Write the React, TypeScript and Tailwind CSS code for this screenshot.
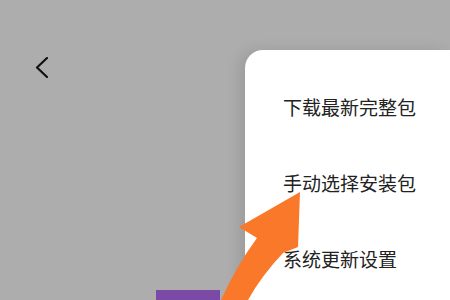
export default function App() {
  const items = ["下载最新完整包", "手动选择安装包", "系统更新设置"];

  return (
    <div className="relative w-[450px] h-[300px] overflow-hidden bg-[#adadad] flex font-['Noto_Sans_CJK_SC',sans-serif]">
      {/* page under the dim layer */}
      <div className="w-[245px] h-full flex flex-col">
        <div className="pl-[35px] pt-[57px]">
          <svg width="13" height="21" viewBox="0 0 13 21" fill="none">
            <polyline
              points="12,1 2,10.5 12,20"
              stroke="#111"
              strokeWidth="2.2"
              strokeLinecap="round"
              strokeLinejoin="round"
            />
          </svg>
        </div>
        <div className="mt-auto ml-[156px] w-[64px] h-[10px] bg-[#7b4aa6]" />
      </div>

      {/* menu card */}
      <div className="flex-1 mt-[50px] bg-white rounded-tl-[18px] shadow-[-6px_0_14px_rgba(0,0,0,0.10)] pl-[38px] pt-[45px] flex flex-col gap-[52px]">
        {items.map((t) => (
          <p key={t} className="text-[19px] leading-[24px] text-[#222] whitespace-nowrap">
            {t}
          </p>
        ))}
      </div>

      {/* orange pointer arrow */}
      <svg
        className="absolute left-0 top-0 pointer-events-none"
        width="450"
        height="300"
        viewBox="0 0 450 300"
      >
        <path
          d="M300 192 L298 247 L283 253 Q262 275 248 300 L221 300 Q237 265 257 238 L239 227 Z"
          fill="#fa782a"
        />
      </svg>
    </div>
  );
}
